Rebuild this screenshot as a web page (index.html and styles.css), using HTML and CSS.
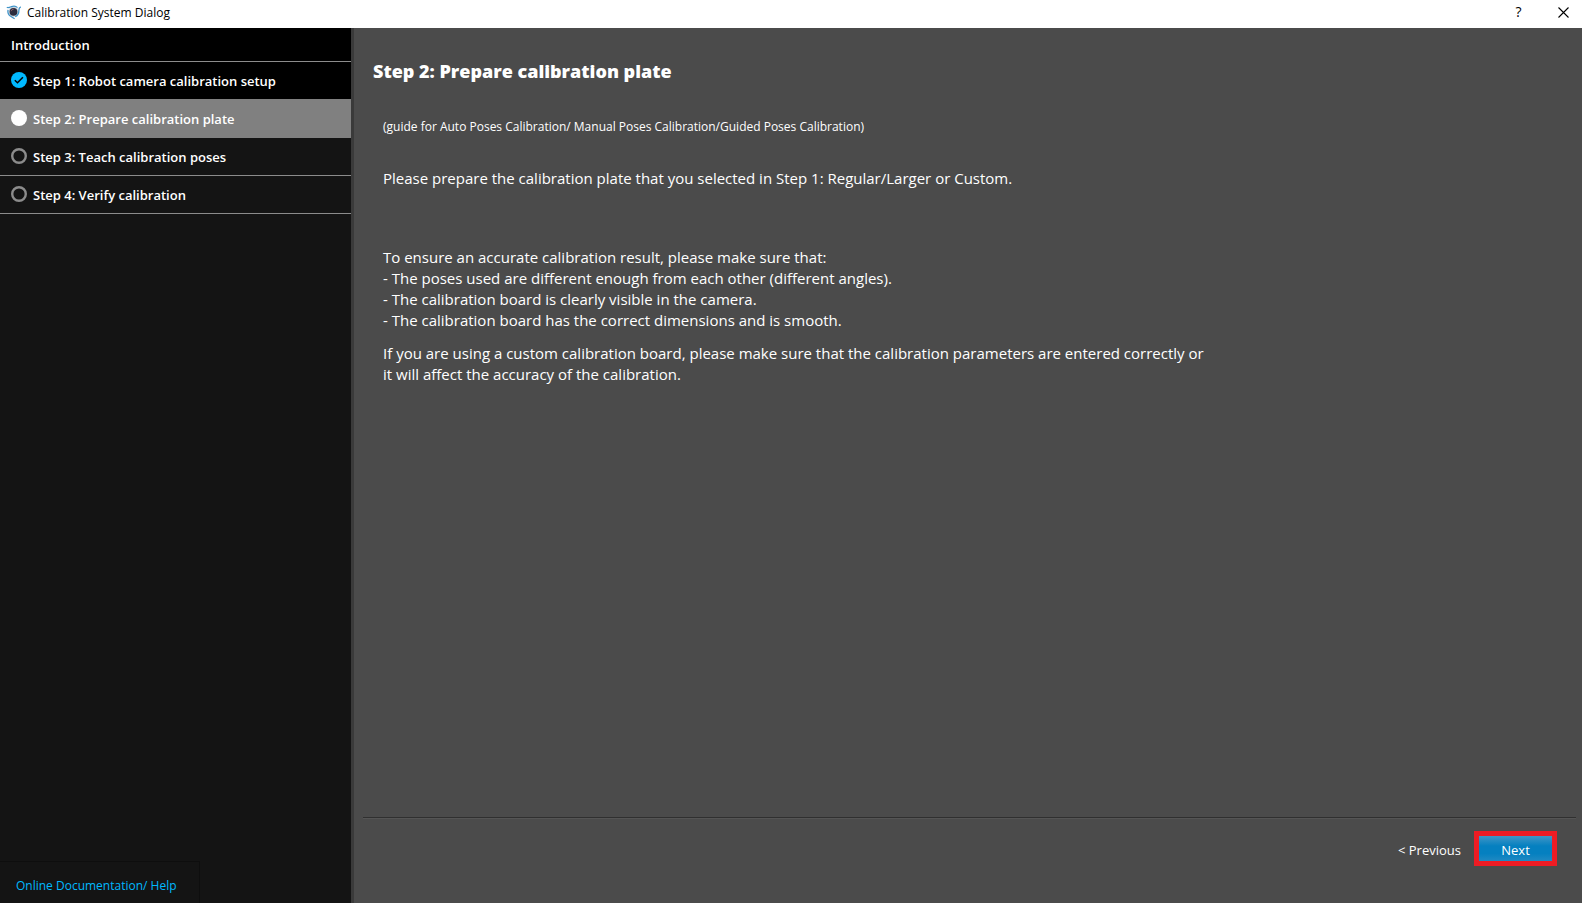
FILE: index.html
```html
<!DOCTYPE html>
<html lang="en">
<head>
<meta charset="utf-8">
<title>Calibration System Dialog</title>
<link rel="stylesheet" href="styles.css">
</head>
<body>
<div class="dialog">
  <header class="titlebar">
    <svg class="app-icon" viewBox="0 0 16 16" aria-hidden="true">
      <circle cx="7.500" cy="7.800" r="5" fill="#c9d2da"/>
      <circle cx="7.500" cy="7.800" r="3.900" fill="#2c2c3e"/>
      <path d="M5.200 7.200a2.500 2.500 0 0 1 2.500-2" fill="none" stroke="#8a5c66" stroke-width="1"/>
      <path d="M.8 3.300c1.400.9 2.700.2 4.700-.7 2.200-.9 4.600-.4 6 1M14.800 2.800c-1.300.5-2 1.600-1.900 3.400.1 3-1.300 5.300-3.700 6.600M2 5.800c-.5 3 .6 5.400 3 6.700l3.600 2.300" fill="none" stroke="#3f93c8" stroke-width="1.300"/>
    </svg>
    <span class="titlebar-text">Calibration System Dialog</span>
    <button class="window-button" type="button" aria-label="Help">?</button>
    <button class="window-button" type="button" aria-label="Close">
      <svg class="close-icon" viewBox="0 0 11 11" aria-hidden="true"><path d="M.5.5l10 10M10.500.5l-10 10" fill="none" stroke="#000" stroke-width="1.100"/></svg>
    </button>
  </header>
  <div class="workspace">
    <nav class="sidebar" aria-label="Calibration steps">
      <a class="step step-intro" href="#intro">Introduction</a>
      <a class="step step-done" href="#step1">
        <svg class="step-icon" viewBox="0 0 16 16" aria-hidden="true"><circle cx="8" cy="8" r="8" fill="#00b9ff"/><path d="M3.800 8.200l2.700 2.600 5.400-5.600" fill="none" stroke="#000" stroke-width="1.500"/></svg>
        Step 1: Robot camera calibration setup</a>
      <a class="step step-current" href="#step2" aria-current="step">
        <svg class="step-icon" viewBox="0 0 16 16" aria-hidden="true"><circle cx="8" cy="8" r="8" fill="#fff"/></svg>
        Step 2: Prepare calibration plate</a>
      <a class="step" href="#step3">
        <svg class="step-icon" viewBox="0 0 16 16" aria-hidden="true"><circle cx="8" cy="8" r="6.800" fill="none" stroke="#8c8c8c" stroke-width="2.400"/></svg>
        Step 3: Teach calibration poses</a>
      <a class="step" href="#step4">
        <svg class="step-icon" viewBox="0 0 16 16" aria-hidden="true"><circle cx="8" cy="8" r="6.800" fill="none" stroke="#8c8c8c" stroke-width="2.400"/></svg>
        Step 4: Verify calibration</a>
      <a class="help-link" href="#help">Online Documentation/ Help</a>
    </nav>
    <main class="page">
      <div class="content">
        <h1 class="heading">Step 2: Prepare calibration plate</h1>
        <div class="copy">
          <p class="guide">(guide for Auto Poses Calibration/ Manual Poses Calibration/Guided Poses Calibration)</p>
          <p class="lead">Please prepare the calibration plate that you selected in Step 1: Regular/Larger or Custom.</p>
          <p class="tips">To ensure an accurate calibration result, please make sure that:<br>
            - The poses used are different enough from each other (different angles).<br>
            - The calibration board is clearly visible in the camera.<br>
            - The calibration board has the correct dimensions and is smooth.</p>
          <p class="note">If you are using a custom calibration board, please make sure that the calibration parameters are entered correctly or<br>
            it will affect the accuracy of the calibration.</p>
        </div>
      </div>
      <footer class="actions">
        <button class="previous" type="button">&lt; Previous</button>
        <button class="next" type="button">Next</button>
      </footer>
    </main>
  </div>
</div>
</body>
</html>
```
FILE: styles.css
```css
* {
  box-sizing: border-box;
}

body {
  margin: 0;
  color: #fff;
  font: 15px/21px "Open Sans", "Noto Sans", sans-serif;
}

button {
  padding: 0;
  border: 0;
  background: none;
  color: inherit;
  font: inherit;
}

a {
  color: inherit;
  text-decoration: none;
}

h1,
p {
  margin: 0;
}

.dialog {
  display: flex;
  flex-direction: column;
  min-height: 100vh;
}

.titlebar {
  display: flex;
  align-items: center;
  height: 28px;
  padding-left: 6px;
  background: #fff;
  color: #000;
  font-size: 12px;
  line-height: 16px;
}

.app-icon {
  width: 16px;
  height: 16px;
  margin-bottom: 4px;
}

.titlebar-text {
  flex: 1;
  padding: 0 0 2px 5px;
}

.window-button {
  display: flex;
  align-items: center;
  justify-content: center;
  width: 45px;
  height: 28px;
  padding: 0 0 4px 8px;
  font-size: 14px;
}

.close-icon {
  width: 11px;
  height: 11px;
}

.workspace {
  display: flex;
  flex: 1;
}

.sidebar {
  display: flex;
  flex-direction: column;
  align-items: stretch;
  width: 354px;
  border-right: 3px solid #3a3a3a;
  background: #141414;
}

.step {
  display: flex;
  align-items: center;
  gap: 6px;
  height: 38px;
  padding: 2px 11px 0;
  border-bottom: 1px solid #8c8c8c;
  font-size: 13px;
  font-weight: 600;
}

.step-intro {
  height: 34px;
  background: #000;
}

.step-done {
  height: 37px;
  border-bottom: 0;
  background: #000;
}

.step-current {
  height: 39px;
  border-bottom: 0;
  background: #808080;
}

.step-icon {
  width: 16px;
  height: 16px;
  margin-bottom: 4px;
}

.help-link {
  align-self: flex-start;
  width: 200px;
  margin-top: auto;
  padding: 13px 0 7px 16px;
  border: solid #0e0e0e;
  border-width: 1px 1px 0 0;
  color: #00b9ff;
  font-size: 12px;
}

.page {
  display: flex;
  flex: 1;
  flex-direction: column;
  justify-content: space-between;
  padding: 31px 6px 37px 9px;
  background: #4b4b4b;
}

.content {
  padding-left: 10px;
}

.heading {
  font-size: 18px;
  font-weight: 800;
  line-height: 24px;
}

.copy {
  padding-left: 10px;
}

.guide {
  padding-top: 35px;
  font-size: 12px;
  line-height: 18px;
}

.lead {
  padding-top: 32px;
}

.tips {
  padding-top: 58px;
}

.note {
  padding-top: 12px;
}

.actions {
  display: flex;
  align-items: center;
  justify-content: flex-end;
  gap: 13px;
  padding: 13px 19px 0 0;
  border-top: 1px solid #303030;
  box-shadow: inset 0 1px #555;
  font-size: 13px;
}

.previous {
  padding-top: 3px;
}

.next {
  width: 83px;
  height: 35px;
  padding-top: 3px;
  border: 5px solid #ed1c24;
  background: linear-gradient(#4096c6, #0580c0 40%, #0580c0 70%, #2089c2);
}
```
